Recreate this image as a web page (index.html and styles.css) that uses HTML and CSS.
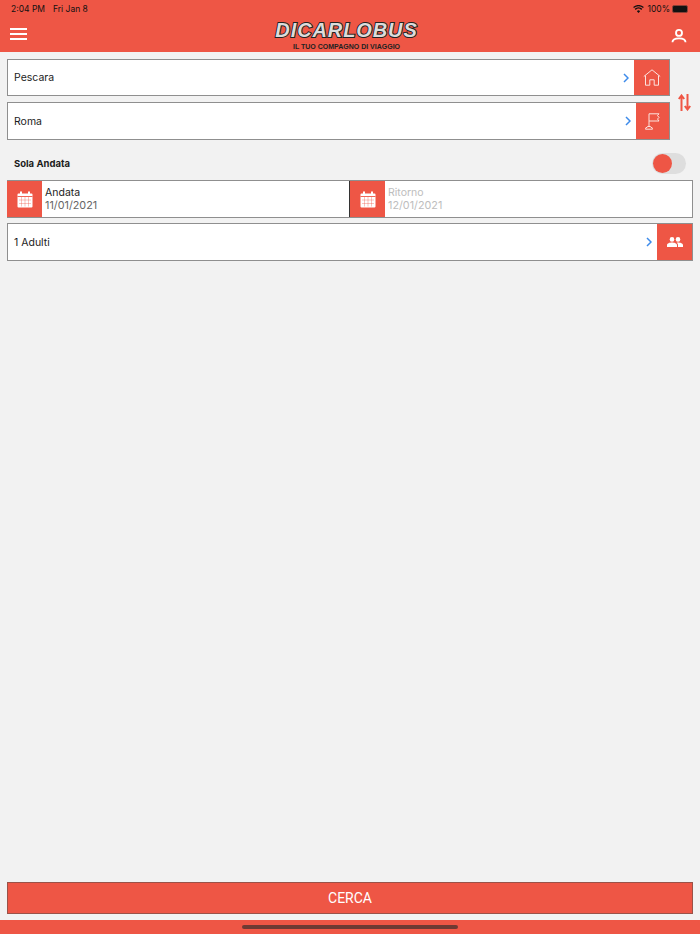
FILE: index.html
```html
<!DOCTYPE html>
<html lang="en">
  <head>
    <meta charset="UTF-8" />
    <title>Dicarlobus</title>
    <link rel="stylesheet" href="styles.css">
  </head>
  <body>
    <!-- Header -->
    <div class="header">
      <div class="statusbar">
        <div class="time"><span>2:04 PM</span><span>Fri Jan 8</span></div>
        <div class="sysicons">
          <svg class="wifi" width="11" height="8" viewBox="0 0 12 9"><path d="M6 9 4.200 6.900a2.600 2.600 0 0 1 3.600 0zM2.900 5.600 1.700 4.300a6.200 6.200 0 0 1 8.600 0L9.100 5.600a4.400 4.400 0 0 0-6.200 0zM.9 3.400 0 2.300a8.800 8.800 0 0 1 12 0l-.9 1.100a7.400 7.400 0 0 0-10.200 0z" fill="#111"/></svg>
          <span>100%</span>
          <div class="battery"><div class="battery-fill"></div></div>
        </div>
      </div>
      <div class="navbar">
        <svg class="menu" width="17" height="12" viewBox="0 0 17 12"><path d="M0 1h17M0 6h17M0 11h17" stroke="#fff" stroke-width="2"/></svg>
        <div class="logo">
          <div class="logo-name">DICARLOBUS</div>
          <div class="logo-claim">IL TUO COMPAGNO DI VIAGGIO</div>
        </div>
        <svg class="user" width="16" height="14" viewBox="0 0 16 15" fill="none" stroke="#fff" stroke-width="2"><circle cx="8" cy="4.200" r="3.200"/><path d="M1 14.200c0-3 3-4.200 7-4.200s7 1.200 7 4.200"/></svg>
      </div>
    </div>

    <!-- Content -->
    <div class="main">
      <div class="route">
        <div class="route-fields">
          <div class="field from">
            <div class="field-text">Pescara</div>
            <svg class="chevron" width="6" height="10" viewBox="0 0 6 10"><path d="M1 1l4 4-4 4" fill="none" stroke="#3d8bea" stroke-width="1.500"/></svg>
            <div class="field-icon home-box">
              <svg width="18" height="17" viewBox="0 0 18 17" fill="none" stroke="#fbe3df" stroke-width="1"><path d="M.8 7.500 9 .8l8.200 6.700M2.500 6.500v9.700h4.300v-5.400h4.400v5.400h4.300V6.500"/></svg>
            </div>
          </div>
          <div class="field to">
            <div class="field-text">Roma</div>
            <svg class="chevron" width="6" height="10" viewBox="0 0 6 10"><path d="M1 1l4 4-4 4" fill="none" stroke="#3d8bea" stroke-width="1.500"/></svg>
            <div class="field-icon flag-box">
              <svg width="15" height="17" viewBox="0 0 15 17" fill="none" stroke="#fbe3df" stroke-width="1"><path d="M4 13.500V.8h10l-1.500 1.700L14 4.500l-1.500 1.500L14 8H4M2.500 13.500h3l.5 1h1l.5 1.700H.5l.5-1.700h1z"/></svg>
            </div>
          </div>
        </div>
        <svg class="swap" width="13" height="17" viewBox="0 0 13 17" fill="none" stroke="#ef5645" stroke-width="2"><path d="M3.500 17V2M.8 5l2.700-3.500L6.200 5M9.500 0v15M6.800 12l2.700 3.500 2.700-3.500"/></svg>
      </div>

      <div class="oneway">
        <div class="oneway-label">Sola Andata</div>
        <div class="toggle"><div class="toggle-knob"></div></div>
      </div>

      <div class="dates">
        <div class="date outbound">
          <div class="date-icon">
            <svg width="16" height="17" viewBox="0 0 16 17"><path d="M1.500 2.500h13a1 1 0 0 1 1 1v12a1 1 0 0 1-1 1h-13a1 1 0 0 1-1-1v-12a1 1 0 0 1 1-1z" fill="#fff"/><path d="M4 .5v3M12 .5v3" stroke="#fff" stroke-width="2"/><path d="M.5 5.500h15" stroke="#ef5645" stroke-width=".9"/><path d="M2 9h12M2 12.500h12M4.500 6v9.500M8 6v9.500M11.500 6v9.500" stroke="#ef5645" stroke-width=".6" stroke-opacity=".6"/></svg>
          </div>
          <div class="date-text">
            <div class="date-label">Andata</div>
            <div class="date-value">11/01/2021</div>
          </div>
        </div>
        <div class="date disabled">
          <div class="date-icon">
            <svg width="16" height="17" viewBox="0 0 16 17"><path d="M1.500 2.500h13a1 1 0 0 1 1 1v12a1 1 0 0 1-1 1h-13a1 1 0 0 1-1-1v-12a1 1 0 0 1 1-1z" fill="#fff"/><path d="M4 .5v3M12 .5v3" stroke="#fff" stroke-width="2"/><path d="M.5 5.500h15" stroke="#ef5645" stroke-width=".9"/><path d="M2 9h12M2 12.500h12M4.500 6v9.500M8 6v9.500M11.500 6v9.500" stroke="#ef5645" stroke-width=".6" stroke-opacity=".6"/></svg>
          </div>
          <div class="date-text">
            <div class="date-label">Ritorno</div>
            <div class="date-value">12/01/2021</div>
          </div>
        </div>
      </div>

      <div class="field passengers">
        <div class="field-text">1 Adulti</div>
        <svg class="chevron" width="6" height="10" viewBox="0 0 6 10"><path d="M1 1l4 4-4 4" fill="none" stroke="#3d8bea" stroke-width="1.500"/></svg>
        <div class="field-icon people-box">
          <svg width="16" height="10" viewBox="0 0 16 10" fill="#fff"><circle cx="5" cy="2.400" r="2.300"/><circle cx="11" cy="2.400" r="2.300"/><path d="M0 10V8.200C0 6.400 2.700 5.600 5 5.600s5 .8 5 2.600V10zM11 10V8c0-1-.5-1.800-1.300-2.300.4-.1.900-.1 1.300-.1 2.300 0 5 .8 5 2.600V10z"/></svg>
        </div>
      </div>

      <button class="search">CERCA</button>
    </div>

    <!-- Footer -->
    <div class="footer"><div class="home-bar"></div></div>
  </body>
</html>
```

FILE: styles.css
```css
* {
  box-sizing: border-box;
}

body {
  margin: 0;
  height: 934px;
  font-family: 'Inter', 'Liberation Sans', sans-serif;
  background-color: #f2f2f2;
  color: #1c1c1c;
  display: flex;
  flex-direction: column;
  overflow: hidden;
}

.header {
  background-color: #ee5645;
  height: 52px;
  flex-shrink: 0;
}

.statusbar {
  height: 17px;
  padding: 0 12px 0 11px;
  display: flex;
  justify-content: space-between;
  align-items: center;
  font-size: 8.5px;
  color: #111;
}

.time {
  display: flex;
  gap: 8px;
}

.sysicons {
  display: flex;
  align-items: center;
  gap: 2px;
}

.wifi {
  margin-right: 1px;
}

.battery {
  width: 16px;
  height: 8px;
  padding: 1px;
  border-radius: 2px;
  background-color: #111;
  border: 1px solid #8a4036;
}

.battery-fill {
  height: 100%;
  background-color: #111;
}

.navbar {
  height: 35px;
  padding: 0 13px 0 10px;
  display: flex;
  justify-content: space-between;
  align-items: center;
}

.menu {
  margin-top: -2px;
}

.user {
  margin-top: 3px;
}

.logo {
  width: 150px;
  margin: 2px 5px 0 0;
  text-align: center;
  color: #222;
}

.logo-name {
  font-family: 'Liberation Sans', sans-serif;
  font-size: 20px;
  line-height: 19px;
  font-weight: bold;
  font-style: italic;
  letter-spacing: 0.9px;
  color: #dcdcdc;
  -webkit-text-stroke: 2px #222;
  paint-order: stroke fill;
}

.logo-claim {
  font-family: 'Liberation Sans', sans-serif;
  font-size: 7px;
  line-height: 9px;
  font-weight: bold;
  margin-top: 2px;
}

.main {
  flex: 1;
  padding: 7px 7px 6px;
  display: flex;
  flex-direction: column;
}

.route {
  display: flex;
  align-items: center;
}

.route-fields {
  width: 663px;
  display: flex;
  flex-direction: column;
  gap: 6px;
}

.swap {
  margin: 6px 0 0 8px;
}

.field {
  background: white;
  border: 1px solid #8f8f8f;
  display: flex;
  align-items: center;
}

.from {
  height: 37px;
}

.to {
  height: 38px;
}

.field-text {
  flex: 1;
  padding-left: 6px;
  font-size: 10.5px;
}

.chevron {
  margin-right: 5px;
}

.field-icon {
  align-self: stretch;
  background-color: #ee5645;
  display: flex;
  justify-content: center;
  align-items: center;
}

.home-box {
  width: 35px;
}

.flag-box {
  width: 33px;
}

.people-box {
  width: 35px;
}

.oneway {
  height: 22px;
  margin: 12px 7px 6px 0;
  padding-left: 7px;
  display: flex;
  justify-content: space-between;
  align-items: center;
}

.oneway-label {
  font-size: 9.5px;
  font-weight: bold;
}

.toggle {
  width: 34px;
  height: 21px;
  border-radius: 11px;
  background-color: #dedede;
}

.toggle-knob {
  width: 19px;
  height: 19px;
  margin: 1px;
  border-radius: 50%;
  background-color: #ee5645;
}

.dates {
  display: flex;
  height: 38px;
  background: white;
  border: 1px solid #8f8f8f;
}

.date {
  display: flex;
  align-items: stretch;
}

.outbound {
  flex: 0 0 341px;
}

.outbound .date-icon {
  margin-left: -1px;
}

.date.disabled {
  flex: 1;
  border-left: 1px solid #333;
}

.date-icon {
  width: 35px;
  background-color: #ee5645;
  display: flex;
  justify-content: center;
  align-items: center;
}

.date-text {
  padding: 5px 0 0 3px;
  font-size: 10.8px;
  line-height: 13px;
}

.date-label {
  font-size: 10.5px;
}

.date-value {
  color: #666;
}

.date.disabled .date-text {
  padding-left: 3px;
}

.date.disabled .date-label,
.date.disabled .date-value {
  color: #bdbdbd;
}

.passengers {
  margin-top: 5px;
  height: 38px;
}

.search {
  margin-top: auto;
  height: 32px;
  width: 100%;
  padding: 0;
  background-color: #ee5645;
  border: 1px solid #9a5248;
  color: white;
  font-family: 'Roboto', sans-serif;
  font-size: 14px;
}

.footer {
  height: 14px;
  flex-shrink: 0;
  background-color: #ee5645;
  display: flex;
  justify-content: center;
  padding-top: 5px;
}

.home-bar {
  width: 216px;
  height: 4px;
  border-radius: 2px;
  background-color: #6e3a33;
}
```
